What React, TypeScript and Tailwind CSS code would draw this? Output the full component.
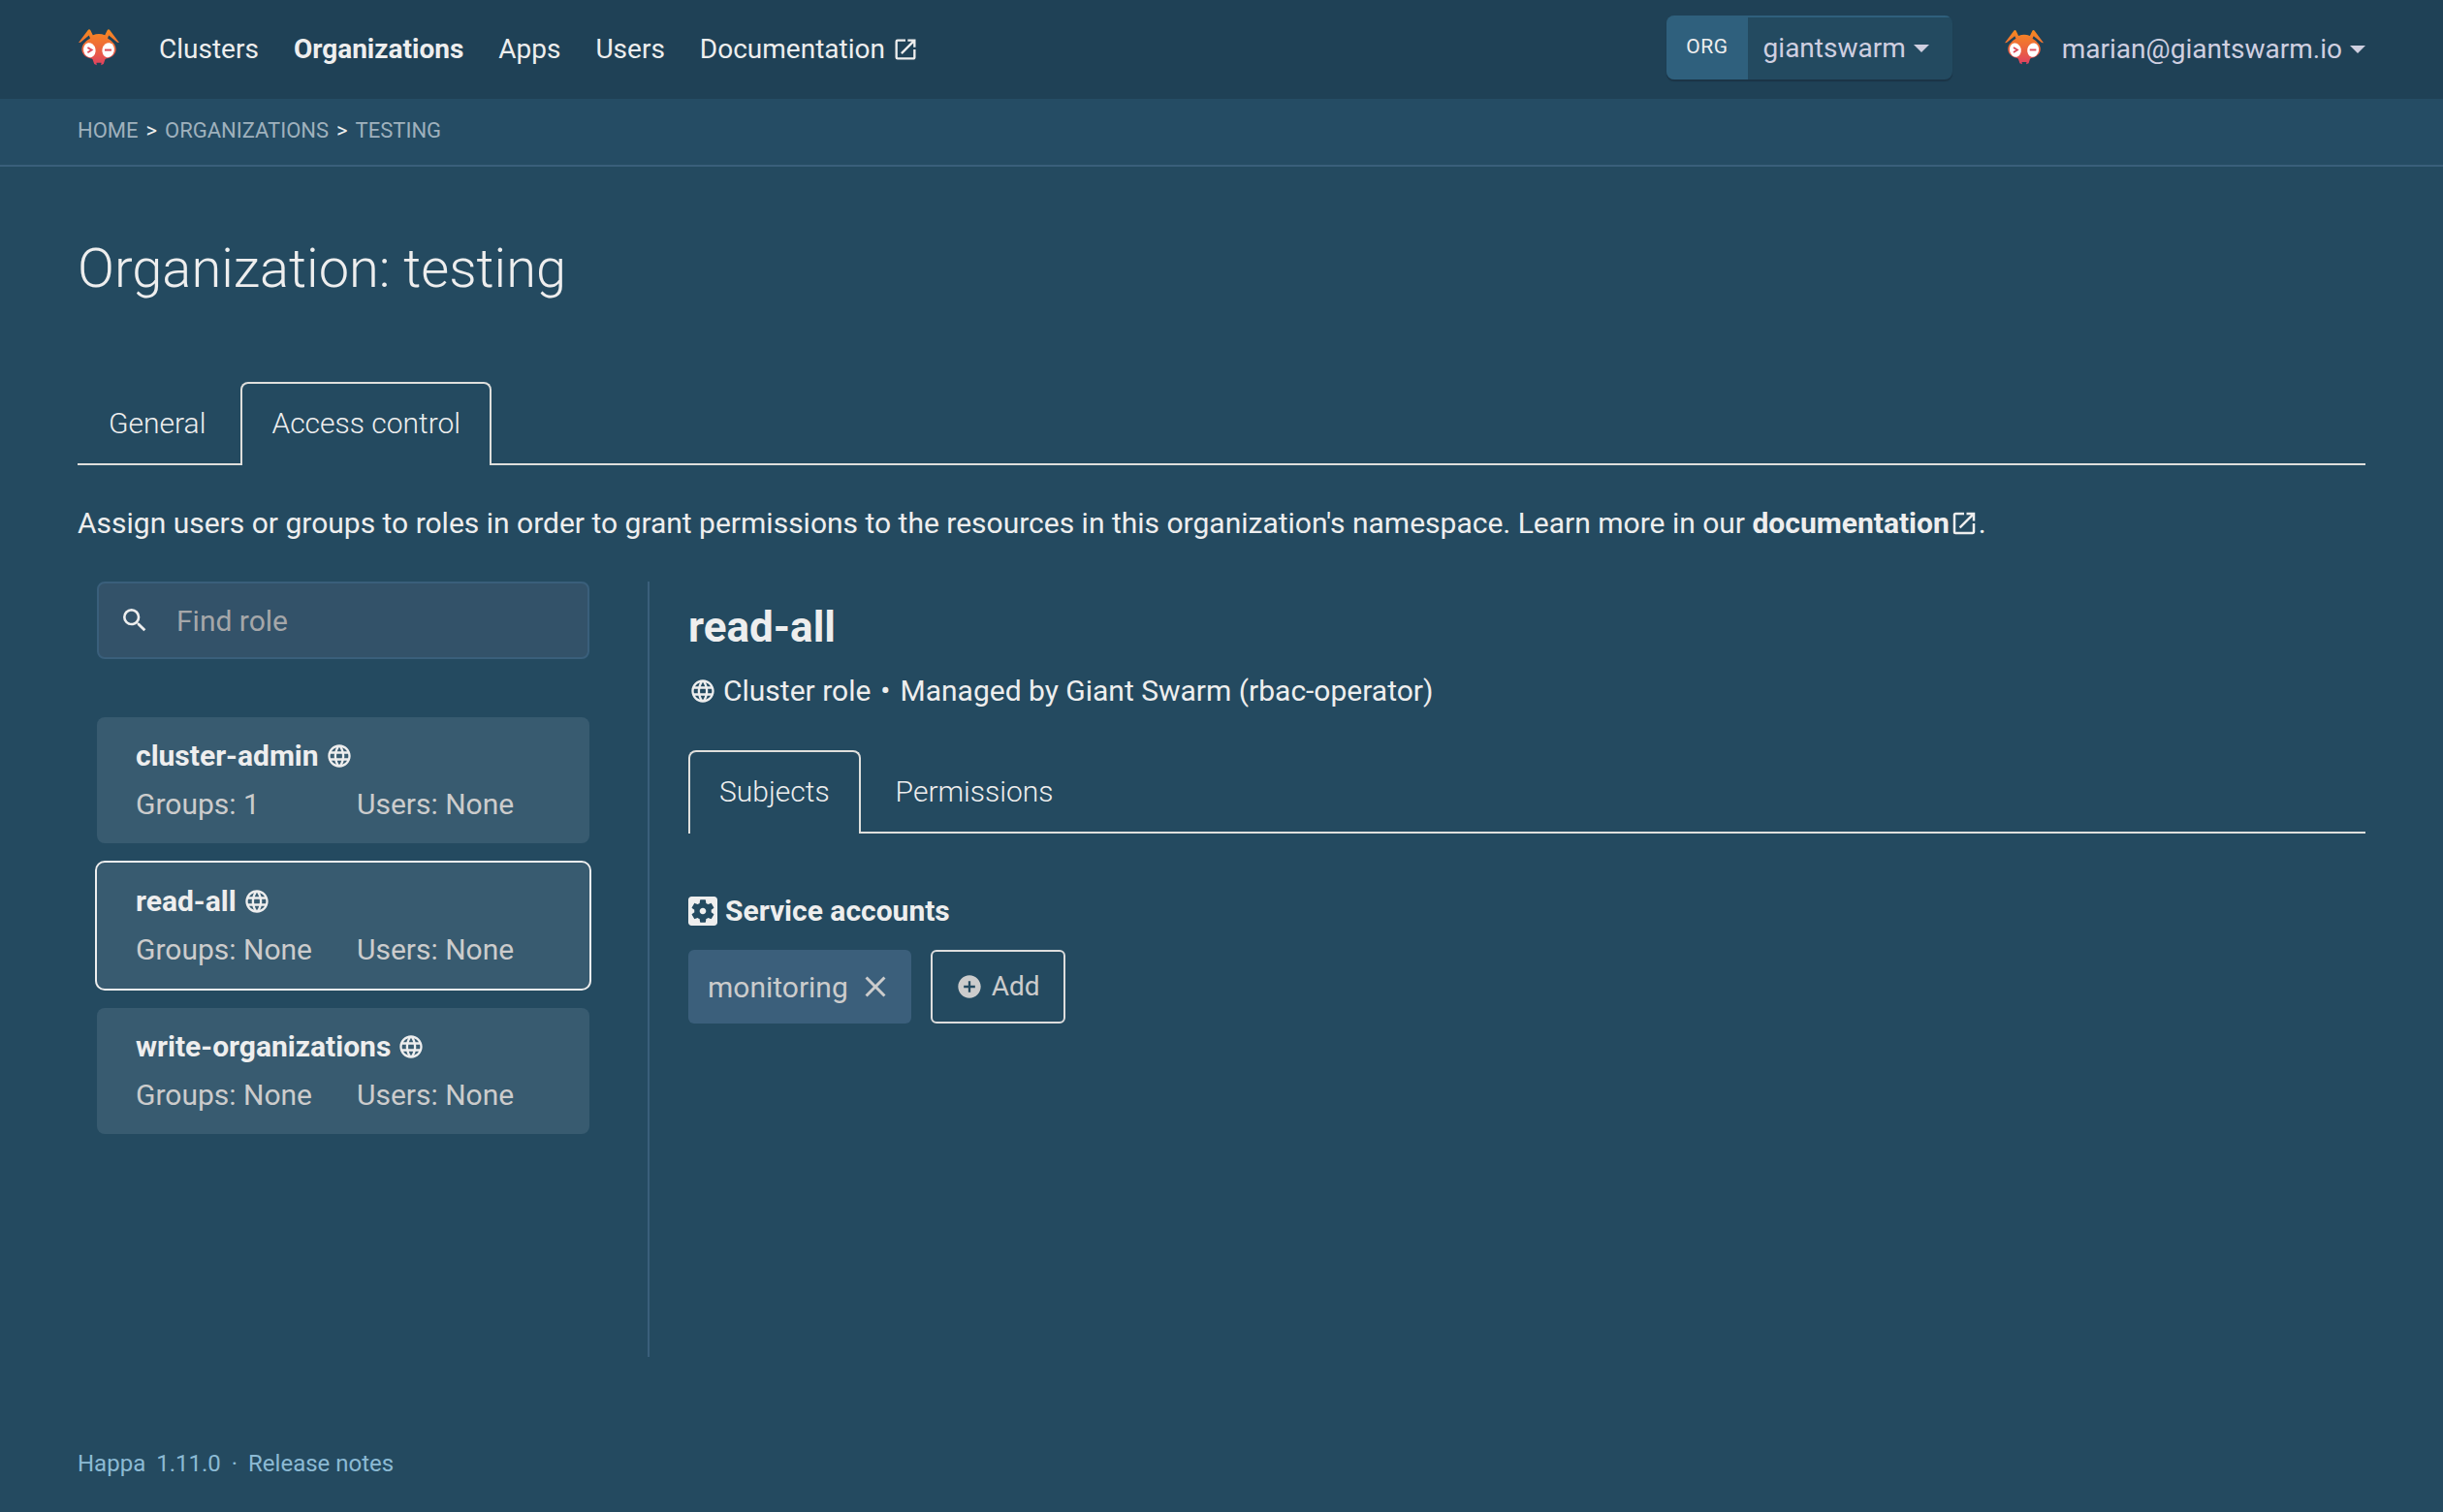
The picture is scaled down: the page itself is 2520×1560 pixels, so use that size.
import type { ReactNode } from 'react';
import {
  MdAddCircle,
  MdClose,
  MdLanguage,
  MdOpenInNew,
  MdSearch,
} from 'react-icons/md';

type Role = { name: string; groups: string; users: string; active?: boolean };

const roles: Role[] = [
  { name: 'cluster-admin', groups: '1', users: 'None' },
  { name: 'read-all', groups: 'None', users: 'None', active: true },
  { name: 'write-organizations', groups: 'None', users: 'None' },
];

function AntLogo({ id, className }: { id: string; className: string }) {
  return (
    <svg viewBox="0 0 42 38" className={className} aria-hidden="true">
      <defs>
        <linearGradient id={id} x1="0" y1="0" x2="0" y2="38" gradientUnits="userSpaceOnUse">
          <stop offset="0" stopColor="#f68a1f" />
          <stop offset="0.45" stopColor="#ee6c37" />
          <stop offset="1" stopColor="#df3f63" />
        </linearGradient>
      </defs>
      <path
        fill={`url(#${id})`}
        d="M0 14 L9.800 0.900 Q11 -0.500 12.200 0.900 L14.800 6.300 Q21 3.800 27.200 6.300 L29.800 0.900 Q31 -0.500 32.200 0.900 L42 14 L40 13.800 L31.200 6.600 L30 9.400 Q34.500 11.800 37 15.500 Q39.800 20 37.800 24.500 Q35.400 29.400 28.400 30.600 Q27.200 31 27 32.500 L25.800 36 L23.200 37.200 L23.600 34.800 L18.400 34.800 L18.800 37.200 L16.200 36 L15 32.500 Q14.800 31 13.600 30.600 Q6.600 29.400 4.200 24.500 Q2.200 20 5 15.500 Q7.500 11.800 12 9.400 L10.800 6.600 L2 13.800 Z"
      />
      <ellipse cx="11.400" cy="21.700" rx="6.200" ry="7.600" fill="#fff" transform="rotate(-12 11.400 21.700)" />
      <ellipse cx="30.600" cy="21.700" rx="6.200" ry="7.600" fill="#fff" transform="rotate(12 30.600 21.700)" />
      <path d="M9.400 19 L13.600 21.600 L9.400 24.200" fill="none" stroke="#dc4a58" strokeWidth="1.900" />
      <path d="M27 21.600 H34" stroke="#dc4a58" strokeWidth="2" />
    </svg>
  );
}

function ServiceAccountIcon() {
  return (
    <svg viewBox="3 3 18 18" className="h-[30px] w-[30px] fill-current" aria-hidden="true">
      <path d="M12 10c-1.100 0-2 .9-2 2s.9 2 2 2 2-.9 2-2-.9-2-2-2zm7-7H5c-1.110 0-2 .9-2 2v14c0 1.100.890 2 2 2h14c1.110 0 2-.9 2-2V5c0-1.100-.890-2-2-2zm-1.750 9c0 .230-.020.460-.050.680l1.480 1.160c.130.110.170.300.080.450l-1.400 2.420c-.090.150-.270.210-.430.150l-1.740-.700c-.360.280-.760.510-1.180.690l-.260 1.850c-.030.170-.180.300-.350.300h-2.800c-.170 0-.320-.130-.350-.290l-.260-1.850c-.430-.180-.820-.410-1.180-.690l-1.740.700c-.160.060-.340 0-.430-.150l-1.400-2.420c-.090-.150-.050-.340.080-.450l1.480-1.160c-.030-.230-.050-.460-.050-.690 0-.230.020-.460.050-.680l-1.480-1.160c-.130-.110-.170-.300-.080-.450l1.400-2.420c.090-.150.270-.210.430-.150l1.740.700c.360-.280.760-.510 1.180-.690l.260-1.850c.030-.170.180-.300.350-.300h2.800c.170 0 .320.130.350.290l.260 1.850c.430.180.820.410 1.180.690l1.740-.700c.160-.060.340 0 .430.150l1.400 2.420c.090.150.050.340-.080.450l-1.480 1.160c.030.230.050.460.050.690z" />
    </svg>
  );
}

function Caret() {
  return (
    <svg viewBox="0 0 16 8" className="h-2 w-4 fill-current" aria-hidden="true">
      <path d="M0 0h16L8 8z" />
    </svg>
  );
}

function NavLink({ children, active }: { children: ReactNode; active?: boolean }) {
  return (
    <a
      href="#"
      aria-current={active ? 'page' : undefined}
      className={active ? 'flex items-center gap-[7px] font-bold' : 'flex items-center gap-[7px]'}
    >
      {children}
    </a>
  );
}

function Tabs({ label, tabs, active }: { label: string; tabs: string[]; active: string }) {
  return (
    <div role="tablist" aria-label={label} className="flex h-[86px] text-[30px] font-light">
      {tabs.map((tab, index) => (
        <div key={tab} className="flex">
          <button
            role="tab"
            aria-selected={tab === active}
            className={
              tab === active
                ? 'rounded-t-lg border-2 border-b-0 border-[#dfdfdc] px-[30px] pb-1'
                : 'border-b-2 border-[#dfdfdc] px-8'
            }
          >
            {tab}
          </button>
          {index < tabs.length - 1 && <div className="w-1 border-b-2 border-[#dfdfdc]" />}
        </div>
      ))}
      <div className="flex-1 border-b-2 border-[#dfdfdc]" />
    </div>
  );
}

function RoleCard({ role }: { role: Role }) {
  return (
    <button
      aria-pressed={role.active ?? false}
      className={
        role.active
          ? 'rounded-lg bg-[#385b70] px-10 py-[15px] text-left leading-[50px] outline-2 outline-[#eeeeee]'
          : 'rounded-lg bg-[#385b70] px-10 py-[15px] text-left leading-[50px]'
      }
    >
      <span className="flex items-center gap-[7px] font-bold">
        {role.name}
        <MdLanguage className="h-7 w-7" />
      </span>
      <span className="flex text-[#cccccc]">
        <span className="w-[228px]">Groups: {role.groups}</span>
        <span>Users: {role.users}</span>
      </span>
    </button>
  );
}

export default function App() {
  return (
    <div className="flex min-h-screen flex-col bg-[#244a60] font-[Roboto,sans-serif] text-[30px] text-[#eeeeee]">
      <header className="flex h-[102px] items-center justify-between bg-[#1f4156] px-20 text-[28px]">
        <nav className="flex items-center gap-9" aria-label="Main">
          <a href="#" aria-label="Home" className="mr-[5px] pb-1 pl-[1px]">
            <AntLogo id="ant-nav" className="h-[38px] w-[42px]" />
          </a>
          <NavLink>Clusters</NavLink>
          <NavLink active>Organizations</NavLink>
          <NavLink>Apps</NavLink>
          <NavLink>Users</NavLink>
          <NavLink>
            Documentation <MdOpenInNew className="h-7 w-7" />
          </NavLink>
        </nav>
        <div className="flex items-center gap-[54px] text-[#cfcfe0]">
          <button className="mb-1 flex h-[66px] overflow-hidden rounded-lg bg-[#234a60] shadow-[0_2px_1px_#1b3446]">
            <span className="flex h-full items-center bg-[#2f607d] px-5 text-[21px] tracking-wide text-[#eeeeee]">
              ORG
            </span>
            <span className="flex h-full items-center gap-2 border-t-2 border-[#2f607d] pr-6 pl-4">
              giantswarm <Caret />
            </span>
          </button>
          <button className="flex items-center gap-2">
            <AntLogo id="ant-user" className="mr-[11px] mb-1 h-[38px] w-[40px]" />
            marian@giantswarm.io <Caret />
          </button>
        </div>
      </header>

      <nav
        aria-label="Breadcrumb"
        className="flex h-[70px] items-center gap-2 border-b-2 border-[#3a5f7b] bg-[#254c64] px-20 pb-[3px] text-[22px]"
      >
        <a href="#" className="text-[#9fb1bd]">HOME</a>
        <span>&gt;</span>
        <a href="#" className="text-[#9fb1bd]">ORGANIZATIONS</a>
        <span>&gt;</span>
        <a href="#" className="text-[#9fb1bd]">TESTING</a>
      </nav>

      <main className="px-20">
        <h1 className="mt-[70px] mb-[82px] text-[56px] leading-[70px] font-light">Organization: testing</h1>
        <Tabs label="Organization" tabs={['General', 'Access control']} active="Access control" />
        <p className="mt-10 mb-10 leading-10">
          Assign users or groups to roles in order to grant permissions to the resources in this
          organization&apos;s namespace. Learn more in our{' '}
          <a href="#" className="font-bold">
            documentation
            <MdOpenInNew className="mb-1 inline h-[30px] w-[30px]" />
          </a>
          .
        </p>

        <div className="flex min-h-[800px]">
          <aside className="flex w-[590px] shrink-0 flex-col border-r-2 border-[#3a5f7b] pr-[60px] pl-5">
            <label className="mb-[60px] flex h-20 items-center rounded-lg border-2 border-[#3a5f7b] bg-[#335269]">
              <MdSearch className="mr-[23px] ml-[21px] h-8 w-8" />
              <input
                type="text"
                aria-label="Find role"
                placeholder="Find role"
                className="min-w-0 flex-1 bg-transparent pl-1 outline-none placeholder:text-[#a5a7a9]"
              />
            </label>
            <div className="flex flex-col gap-5">
              {roles.map((role) => (
                <RoleCard key={role.name} role={role} />
              ))}
            </div>
          </aside>

          <section className="min-w-0 flex-1 pl-10">
            <h2 className="mt-5 text-[44px] leading-[54px] font-bold">read-all</h2>
            <p className="mt-[18px] mb-10 flex items-center leading-[42px]">
              <MdLanguage className="mr-[7px] ml-[1px] h-7 w-7 shrink-0" />
              Cluster role <span className="mx-[10px]">•</span> Managed by Giant Swarm (rbac-operator)
            </p>
            <Tabs label="Role" tabs={['Subjects', 'Permissions']} active="Subjects" />
            <h3 className="mt-[60px] flex items-center gap-2 leading-10 font-bold">
              <ServiceAccountIcon />
              Service accounts
            </h3>
            <div className="mt-5 flex gap-5 text-[#cccccc]">
              <div className="flex h-[76px] items-center gap-[10px] rounded-md bg-[#3b5f7b] pr-[19px] pl-5">
                monitoring
                <button aria-label="Remove monitoring">
                  <MdClose className="h-9 w-9" />
                </button>
              </div>
              <button className="flex h-[76px] items-center gap-[9px] rounded-md border-2 border-[#dddddd] px-6 text-[28px]">
                <MdAddCircle className="h-7 w-7" />
                Add
              </button>
            </div>
          </section>
        </div>
      </main>

      <footer className="mt-[90px] flex gap-[11px] px-20 text-[24px] leading-10 text-[#8cbad4]">
        <span>Happa</span>
        <a href="#">1.11.0</a>
        <span>·</span>
        <a href="#">Release notes</a>
      </footer>
    </div>
  );
}
